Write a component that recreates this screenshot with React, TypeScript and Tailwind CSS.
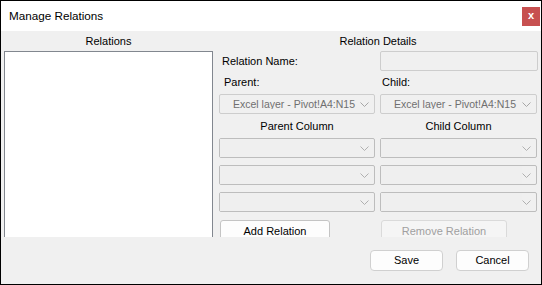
import React from "react";

const font = { fontFamily: '"Liberation Sans", Arial, sans-serif' };

function Chevron({ color = "#a6a6a6" }: { color?: string }) {
  return (
    <svg width="9" height="5" viewBox="0 0 9 5" className="shrink-0">
      <path d="M0.5 0.5 L4.5 4.5 L8.5 0.5" fill="none" stroke={color} strokeWidth="1" />
    </svg>
  );
}

function Combo({ text }: { text?: string }) {
  return (
    <div className="h-[20px] rounded-[2px] border border-[#cdcdcd] bg-[#f0f0f0] flex items-center pl-[13px] pr-[5px]">
      <span className="flex-1 text-[10.5px] leading-none text-[#6f6f6f] whitespace-nowrap overflow-hidden">
        {text}
      </span>
      <Chevron />
    </div>
  );
}

function ColCombo() {
  return (
    <div className="h-[20px] rounded-[2px] border border-[#bdbdbd] bg-[#f0f0f0] flex items-center pr-[5px]">
      <div className="flex-1 h-full bg-[#efefef]" />
      <Chevron color="#b0b0b0" />
    </div>
  );
}

export default function App() {
  return (
    <div
      className="w-[542px] h-[285px] border border-black bg-[#f0f0f0] flex flex-col text-black"
      style={font}
    >
      {/* Title bar */}
      <div className="h-[30px] shrink-0 bg-white flex items-center justify-between pl-[8px] pr-[1px]">
        <span className="text-[11.7px] leading-none">Manage Relations</span>
        <div className="w-[18px] h-[19px] bg-[#c75050] flex items-center justify-center text-white text-[11px] font-bold leading-none pb-[2px]">
          x
        </div>
      </div>

      {/* Main area */}
      <div className="h-[206px] shrink-0 overflow-hidden flex items-start pl-[3px] gap-[6px]">
        {/* Left */}
        <div className="w-[209px] flex flex-col">
          <div className="h-[20px] shrink-0 flex items-center justify-center text-[11px]">Relations</div>
          <div className="h-[220px] shrink-0 border border-[#82878f] bg-white" />
        </div>
        {/* Right */}
        <div className="w-[318px] flex flex-col">
          <div className="h-[20px] shrink-0 flex items-center justify-center text-[11px]">Relation Details</div>
          <div className="grid grid-cols-[156px_157px] gap-x-[5px]">
            <div className="h-[20px] flex items-center pl-[3px] text-[11px]">Relation Name:</div>
            <div className="h-[20px] rounded-[2px] border border-[#cdcdcd] bg-[#f0f0f0] w-[158px]" />

            <div className="mt-[1px] h-[20px] flex items-center pl-[5px] text-[11px]">Parent:</div>
            <div className="mt-[1px] h-[20px] flex items-center pl-[2px] text-[11px]">Child:</div>

            <div className="mt-[2px]">
              <Combo text="Excel layer - Pivot!A4:N15" />
            </div>
            <div className="mt-[2px]">
              <Combo text="Excel layer - Pivot!A4:N15" />
            </div>

            <div className="mt-[2px] h-[20px] flex items-center justify-center text-[11px]">Parent Column</div>
            <div className="mt-[2px] h-[20px] flex items-center justify-center text-[11px]">Child Column</div>

            <div className="mt-[2px]"><ColCombo /></div>
            <div className="mt-[2px]"><ColCombo /></div>
            <div className="mt-[7px]"><ColCombo /></div>
            <div className="mt-[7px]"><ColCombo /></div>
            <div className="mt-[7px]"><ColCombo /></div>
            <div className="mt-[7px]"><ColCombo /></div>

            <div className="mt-[8px] pl-[1px]">
              <div className="w-[110px] h-[22px] rounded-[3px] border border-[#c4c4c4] bg-[#fdfdfd] flex items-center justify-center text-[11px]">
                Add Relation
              </div>
            </div>
            <div className="mt-[8px] pl-[1px]">
              <div className="w-[126px] h-[22px] rounded-[3px] border border-[#dadada] bg-[#f5f5f5] flex items-center justify-center text-[11px] text-[#a0a0a0]">
                Remove Relation
              </div>
            </div>
          </div>
        </div>
      </div>

      {/* Bottom buttons */}
      <div className="flex-1 flex justify-end items-start pt-[13px] pr-[12px] gap-[13px]">
        <div className="w-[73px] h-[21px] rounded-[4px] border border-[#d0d0d0] bg-[#fdfdfd] flex items-center justify-center text-[11px]">
          Save
        </div>
        <div className="w-[73px] h-[21px] rounded-[4px] border border-[#d0d0d0] bg-[#fdfdfd] flex items-center justify-center text-[11px]">
          Cancel
        </div>
      </div>
    </div>
  );
}
